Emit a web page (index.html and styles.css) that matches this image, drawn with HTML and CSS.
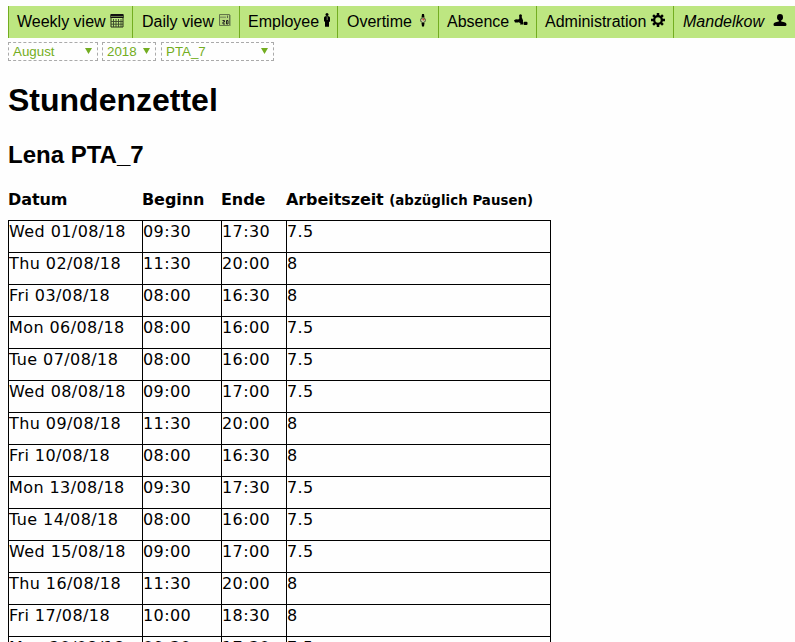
FILE: index.html
```html
<!DOCTYPE html>
<html lang="de">
<head>
<meta charset="utf-8">
<title>Stundenzettel</title>
<link rel="stylesheet" href="styles.css">
</head>
<body>
<nav class="menu">
  <a class="item weekly"><span>Weekly view</span>
    <svg width="14" height="14" viewBox="0 0 14 14"><path d="M1 1h12v12H1z" fill="none" stroke="#262e18"/><path d="M.5 0h13v4H.5z" fill="#111"/><path d="M1 2.500h12" stroke="#8aa95c" stroke-width=".7"/><path d="M3.500 5v8M6 5v8M8.500 5v8M11 5v8M1 7.500h12M1 10.200h12" stroke="#39472a" stroke-width=".9"/></svg></a>
  <a class="item daily"><span>Daily view</span>
    <svg width="12" height="13" viewBox="0 0 12 13"><path d="M.5 .5h10v11H.5z" fill="#b5d77d" stroke="#64774a"/><path d="M2 4v-1.500M4 4V2.500M6 4V2.500M8.500 4V1.500" stroke="#59694a"/><path d="M3.500 6.500h2V8h-1.500v2h2M7.500 10V6.500h1.500V10z" fill="none" stroke="#222"/><path d="M11.500 1v11" stroke="#91b168"/></svg></a>
  <a class="item employee"><span>Employee</span>
    <svg width="6" height="14" viewBox="0 0 6 14"><circle cx="3" cy="1.600" r="1.500"/><path d="M1 3.300h4l1 1.200v4L5 9v4.700H1V9L0 8V4.500z"/><path d="M3.200 4v3" stroke="#94a975" stroke-width=".8"/></svg></a>
  <a class="item overtime"><span>Overtime</span>
    <svg width="6" height="13" viewBox="0 0 6 13"><path d="M2 0h2l.5 3.500h-3zM1.500 9h3L4 12.500H2z"/><circle cx="3" cy="6.200" r="2.400" fill="#c6d9a2" stroke="#424b32"/><path d="M3 6.200V4.500M3 6.200l1.500-1" stroke="#d22"/></svg></a>
  <a class="item absence"><span>Absence</span>
    <svg width="14" height="12" viewBox="0 0 14 12"><circle cx="6.500" cy="1.700" r="1.500"/><path d="M5.300 3h2.300l1.500 3.500L8.300 9h-3zM0 6.300l2-1.100 2.300.3L6 4v3L4.300 8.500H1zM7 7l2 .3v3.300H6z"/><rect x="9.500" y="7.700" width="4" height="3.300" rx="1"/></svg></a>
  <a class="item admin"><span>Administration</span>
    <svg width="14" height="14" viewBox="-7 -7 14 14"><circle r="3.800" fill="none" stroke="#000" stroke-width="2.200"/><g stroke="#000" stroke-width="2.500"><path d="M0-7v3M0 7V4M-7 0h3M7 0H4M-4.900-4.900l2 2M4.900 4.900l-2-2M-4.900 4.900l2-2M4.900-4.900l-2 2"/></g></svg></a>
  <a class="item user"><span>Mandelkow</span>
    <svg width="14" height="12" viewBox="0 0 14 12"><ellipse cx="7" cy="3.300" rx="3" ry="3.300"/><path d="M5.800 5h2.400v2.600c3.300.4 5.300 1.200 5.300 2.900q0 1.500-1.300 1.500H1.800Q.5 12 .5 10.500c0-1.700 2-2.500 5.300-2.900z"/></svg></a>
</nav>
<div class="filters">
  <div class="select month"><span>August</span><i class="arrow"></i></div>
  <div class="select year"><span>2018</span><i class="arrow"></i></div>
  <div class="select person"><span>PTA_7</span><i class="arrow"></i></div>
</div>
<h1>Stundenzettel</h1>
<h2>Lena PTA_7</h2>
<table>
  <colgroup><col class="c-date"><col class="c-begin"><col class="c-end"><col class="c-hours"></colgroup>
  <thead><tr><th>Datum</th><th>Beginn</th><th>Ende</th><th>Arbeitszeit <small>(abzüglich Pausen)</small></th></tr></thead>
  <tbody>
    <tr><td>Wed 01/08/18</td><td>09:30</td><td>17:30</td><td>7.5</td></tr>
    <tr><td>Thu 02/08/18</td><td>11:30</td><td>20:00</td><td>8</td></tr>
    <tr><td>Fri 03/08/18</td><td>08:00</td><td>16:30</td><td>8</td></tr>
    <tr><td>Mon 06/08/18</td><td>08:00</td><td>16:00</td><td>7.5</td></tr>
    <tr><td>Tue 07/08/18</td><td>08:00</td><td>16:00</td><td>7.5</td></tr>
    <tr><td>Wed 08/08/18</td><td>09:00</td><td>17:00</td><td>7.5</td></tr>
    <tr><td>Thu 09/08/18</td><td>11:30</td><td>20:00</td><td>8</td></tr>
    <tr><td>Fri 10/08/18</td><td>08:00</td><td>16:30</td><td>8</td></tr>
    <tr><td>Mon 13/08/18</td><td>09:30</td><td>17:30</td><td>7.5</td></tr>
    <tr><td>Tue 14/08/18</td><td>08:00</td><td>16:00</td><td>7.5</td></tr>
    <tr><td>Wed 15/08/18</td><td>09:00</td><td>17:00</td><td>7.5</td></tr>
    <tr><td>Thu 16/08/18</td><td>11:30</td><td>20:00</td><td>8</td></tr>
    <tr><td>Fri 17/08/18</td><td>10:00</td><td>18:30</td><td>8</td></tr>
    <tr><td>Mon 20/08/18</td><td>09:30</td><td>17:30</td><td>7.5</td></tr>
  </tbody>
</table>
</body>
</html>
```
FILE: styles.css
```css
* { box-sizing: border-box; }
html { height: 100%; overflow: hidden; background: #fefefe; }
body {
  height: 642px;
  margin: 0;
  padding: 6px 0 0 8px;
  overflow: hidden;
  color: #000;
  font-family: "Liberation Sans", Arial, sans-serif;
}
.menu { display: flex; height: 32px; background: #bde681; }
.item {
  display: flex;
  flex: none;
  justify-content: space-between;
  align-items: flex-start;
  padding: 6px 8px 0;
  border-left: 1px solid #73ad21;
  font-size: 16px;
  line-height: 19px;
  white-space: nowrap;
}
.item svg { flex: none; margin-top: 1px; }
.weekly { width: 124px; }
.daily { width: 107px; padding-left: 9px; }
.employee { width: 98px; padding-right: 7px; }
.overtime { width: 101px; padding-left: 9px; padding-right: 12px; }
.absence { width: 98px; }
.admin { width: 137px; }
.user { width: 122px; padding-left: 9px; font-style: italic; }
.weekly svg, .daily svg, .overtime svg, .absence svg, .user svg { margin-top: 2px; }
.filters { display: flex; height: 19px; margin-top: 4px; }
.select {
  display: flex;
  justify-content: space-between;
  padding: 0 5px 0 4px;
  border: 1px dashed #aaa;
  color: #73ad21;
  font-size: 13.333px;
  line-height: 17px;
}
.month { width: 90px; }
.year { width: 54px; margin-left: 4px; }
.person { width: 113px; margin-left: 5px; }
.arrow {
  width: 7px;
  height: 6px;
  margin-top: 5px;
  background: #73ad21;
  clip-path: polygon(0 0, 100% 0, 50% 100%);
}
h1 { margin: 21px 0 0; font-size: 32px; line-height: 36px; }
h2 { margin: 23px 0 0; font-size: 24px; line-height: 28px; }
table {
  width: 543px;
  margin-top: 19px;
  table-layout: fixed;
  border-collapse: separate;
  border-spacing: 0;
  font-family: "DejaVu Sans", Verdana, sans-serif;
  font-size: 16px;
  line-height: 20px;
}
.c-date { width: 134px; }
.c-begin { width: 79px; }
.c-end { width: 65px; }
.c-hours { width: 265px; }
th { height: 32px; padding: 2px 0 0; text-align: left; vertical-align: top; white-space: nowrap; letter-spacing: -0.08px; }
th small { font-size: 13.333px; letter-spacing: 0.06px; }
td {
  height: 32px;
  padding: 1px 0 0;
  border-top: 1px solid #000;
  border-left: 1px solid #000;
  vertical-align: top;
  white-space: nowrap;
  letter-spacing: 0.42px;
}
td:last-child { border-right: 1px solid #000; }
```
